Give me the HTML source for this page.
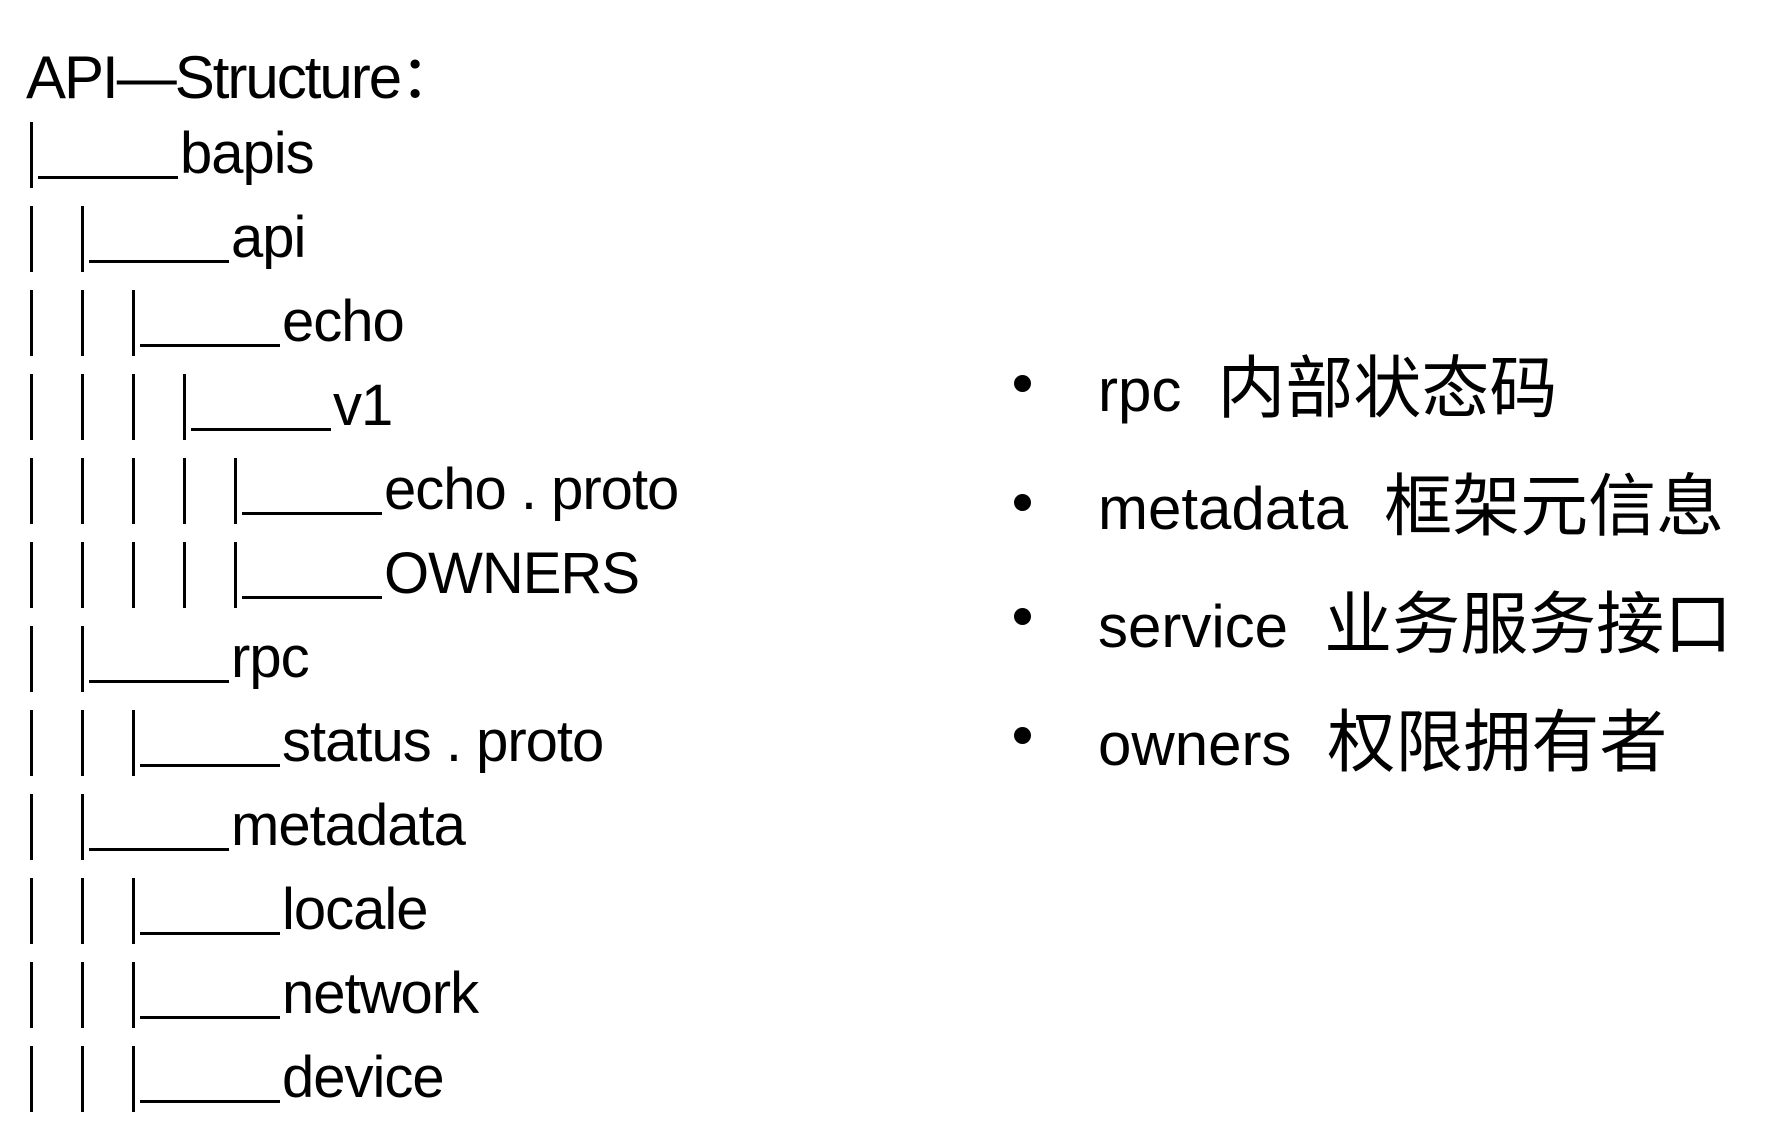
<!DOCTYPE html>
<html><head><meta charset="utf-8"><style>
html,body{margin:0;padding:0;background:#fff;width:1776px;height:1148px;overflow:hidden;position:relative}
.t{position:absolute;font-family:"Liberation Sans","Noto Sans CJK SC",sans-serif;color:#000;white-space:nowrap;line-height:1}
.bar{position:absolute;width:3px;height:66px;background:#000}
.u{position:absolute;height:3px;width:140px;background:#000}
.dot{position:absolute;width:17px;height:17px;border-radius:50%;background:#000}
.cn{font-family:"Noto Sans CJK SC",sans-serif;font-size:68px;margin-left:36px;font-weight:400;position:relative;top:1px}
</style></head><body>
<div class="t" style="left:26px;top:48px;font-size:60px;letter-spacing:-2px">API—Structure：</div>
<div id="tree"></div>
<script>
var rows=[[0,"bapis"],[1,"api"],[2,"echo"],[3,"v1"],[4,"echo . proto"],[4,"OWNERS"],[1,"rpc"],[2,"status . proto"],[1,"metadata"],[2,"locale"],[2,"network"],[2,"device"]];
var h="";
rows.forEach(function(r,i){var b=179+84*i;
for(var k=0;k<=r[0];k++){h+='<div class="bar" style="left:'+(30+51*k)+'px;top:'+(b-57)+'px"></div>';}
var x=30+51*r[0];
h+='<div class="u" style="left:'+(x+8)+'px;top:'+(b-3)+'px"></div>';
h+='<div class="t" style="left:'+(x+150)+'px;top:'+(b-54)+'px;font-size:58px;letter-spacing:-1px">'+r[1]+'</div>';
});
document.getElementById("tree").innerHTML=h;
</script>
<div class="dot" style="left:1014px;top:375px"></div>
<div class="dot" style="left:1014px;top:494px"></div>
<div class="dot" style="left:1014px;top:608px"></div>
<div class="dot" style="left:1014px;top:727px"></div>
<div class="t" style="left:1098px;top:348px;font-size:60px">rpc<span class="cn">内部状态码</span></div>
<div class="t" style="left:1098px;top:466px;font-size:60px">metadata<span class="cn">框架元信息</span></div>
<div class="t" style="left:1098px;top:584px;font-size:60px">service<span class="cn">业务服务接口</span></div>
<div class="t" style="left:1098px;top:702px;font-size:60px">owners<span class="cn">权限拥有者</span></div>
</body></html>
